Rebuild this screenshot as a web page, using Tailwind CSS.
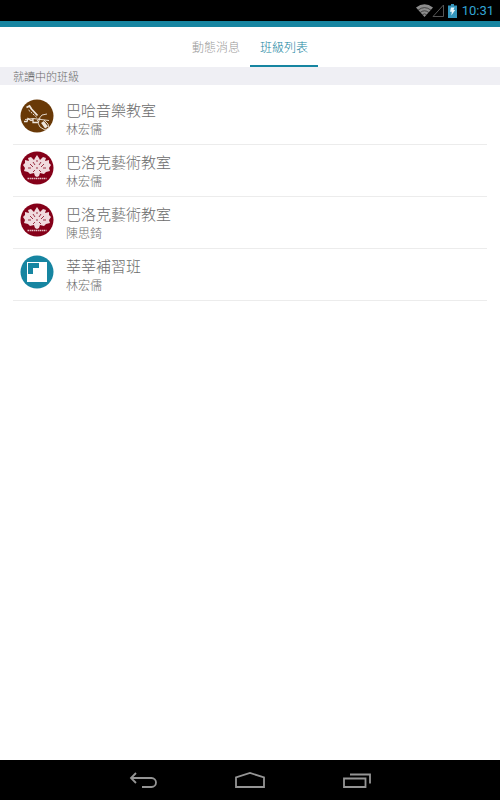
<!DOCTYPE html>
<html lang="zh-Hant">
<head>
    <meta charset="UTF-8">
    <meta name="viewport" content="width=device-width, initial-scale=1.0">
    <title>班級列表</title>
    <script src="https://cdn.jsdelivr.net/npm/@tailwindcss/browser@4"></script>
</head>

<body class="min-h-screen flex flex-col bg-white font-['Noto_Sans_CJK_TC',sans-serif] font-light text-[#6b6b6b]">

    <!-- status bar -->
    <div class="h-[21px] bg-black flex items-center justify-end pr-[6px] text-[#33a5d5]">
        <svg class="w-[17px] h-[13px]" viewBox="0 0 17 13" fill="none">
            <path d="M0 3.5Q8.500-3 17 3.500L8.500 13z" fill="#8c8c8c" />
            <path d="M2 6.200Q8.500 1 15 6.200M4 8.600Q8.500 5 13 8.600M6.300 10.700Q8.500 9 10.700 10.700" stroke="#222" stroke-width=".7" />
        </svg>
        <svg class="w-[12px] h-[13px] ml-[-1px]" viewBox="0 0 12 13" fill="none" stroke="#555">
            <path d="M11.500 1v11.500H1z" />
        </svg>
        <svg class="w-[9px] h-[14px] ml-[4px]" viewBox="0 0 9 14">
            <path d="M3 0h3v1.500h3V14H0V1.500h3z" fill="#3596bd" />
            <path d="M3 3.500h3.500L5.500 6h1.700L3.300 11.500l.5-3.800H2z" fill="#e8f6fb" />
        </svg>
        <span class="ml-[5px] font-[Roboto,sans-serif] font-normal text-[13px] leading-[21px]">10:31</span>
    </div>
    <div class="h-[6px] bg-[#1685a1]"></div>

    <!-- tabs -->
    <nav class="h-10 flex justify-center text-[12px]">
        <a href="#news" class="px-[10px] leading-10 text-[#999]">動態消息</a>
        <a href="#classes" class="px-[10px] leading-10 text-[#1685a1] border-b-2 border-[#1685a1]">班級列表</a>
    </nav>

    <main class="flex-1">
        <h1 class="bg-[#efeff4] pl-[13px] h-[18px] text-[11px] leading-[18px] font-light">就讀中的班級</h1>

        <ul class="mx-[13px] pt-2">
            <li class="h-[52px] flex pt-[6px] pl-[7px] gap-[12px] border-b border-[#ececec]">
                <svg class="w-[34px] h-[34px] shrink-0" viewBox="0 0 34 34" fill="none" stroke="#eee5dc">
                    <circle cx="17" cy="17" r="16.500" fill="#693907" stroke="none" />
                    <path d="M6.500 8.500l3-1.500 2 3 6 6.500" stroke-width="1.800" />
                    <path d="M8.500 11l9 8" stroke-width="1" stroke-dasharray="2 1" />
                    <path d="M22.500 23l4 5.500" stroke-width="3.500" />
                    <path d="M4 22.500h3l1-3 3 2 2-1v3h4l2-1" stroke-width="1.300" />
                    <path d="M5 20.500l8-1 8 1 8 1M17 22l5-6 5-1M20 19l-2 5 2 4 5 3 4-2-1-4-4-4" stroke-width=".9" />
                </svg>
                <div>
                    <h2 class="text-[15px] leading-[22px]">巴哈音樂教室</h2>
                    <p class="text-[12px] leading-[15px]">林宏儒</p>
                </div>
            </li>
            <li class="h-[52px] flex pt-[6px] pl-[7px] gap-[12px] border-b border-[#ececec]">
                <svg class="w-[34px] h-[34px] shrink-0" viewBox="0 0 34 34" fill="none">
                    <circle cx="17" cy="17" r="16.500" fill="#850019" />
                    <g id="crest">
                        <path d="M17 4l2 3 1 2 3-3 3 1-1 3 4-1v3l2 2-2 3 1 3-4 1-2 2-4-1-1 3-2 1-2-1-1-3-4 1-2-2-4-1 1-3-2-3 2-2V9l4 1-1-3 3-1 3 3 1-2z" fill="#f0dade" />
                        <path d="M13 11l2 3M21 11l-2 3M10 13l3 3M24 13l-3 3M8 17h3M26 17h-3M15 19l-2 2M19 19l2 2M17 9v2M17 16v2" stroke="#9b3045" stroke-width="1" />
                        <path d="M7.500 27.500h19" stroke="#e8c8ce" stroke-width="1.600" stroke-dasharray="1.800 .6 1 .6" />
                    </g>
                </svg>
                <div>
                    <h2 class="text-[15px] leading-[22px]">巴洛克藝術教室</h2>
                    <p class="text-[12px] leading-[15px]">林宏儒</p>
                </div>
            </li>
            <li class="h-[52px] flex pt-[6px] pl-[7px] gap-[12px] border-b border-[#ececec]">
                <svg class="w-[34px] h-[34px] shrink-0" viewBox="0 0 34 34" fill="none">
                    <circle cx="17" cy="17" r="16.500" fill="#850019" />
                    <use href="#crest" />
                </svg>
                <div>
                    <h2 class="text-[15px] leading-[22px]">巴洛克藝術教室</h2>
                    <p class="text-[12px] leading-[15px]">陳思錡</p>
                </div>
            </li>
            <li class="h-[52px] flex pt-[6px] pl-[7px] gap-[12px] border-b border-[#ececec]">
                <svg class="w-[34px] h-[34px] shrink-0" viewBox="0 0 34 34">
                    <circle cx="17" cy="17" r="16.500" fill="#1685a1" />
                    <path d="M7 7h20v20H7z" fill="#fff" />
                    <path d="M8 8h11v5h-6v6H8z" fill="#1685a1" />
                </svg>
                <div>
                    <h2 class="text-[15px] leading-[22px]">莘莘補習班</h2>
                    <p class="text-[12px] leading-[15px]">林宏儒</p>
                </div>
            </li>
        </ul>
    </main>

    <!-- system navigation -->
    <footer class="h-10 bg-black flex items-center justify-center gap-[77px]">
        <button type="button" aria-label="Back">
            <svg class="w-[30px] h-[18px]" viewBox="0 0 30 18" fill="none" stroke="#959595" stroke-width="1.800">
                <path d="M3 7h20.500a4.200 4.200 0 0 1 0 9H14M8 2L3 7l5 5" />
            </svg>
        </button>
        <button type="button" aria-label="Home">
            <svg class="w-[30px] h-[18px]" viewBox="0 0 30 18" fill="none" stroke="#959595" stroke-width="1.800">
                <path d="M1 16V6.500L15 2l14 4.500V16z" />
            </svg>
        </button>
        <button type="button" aria-label="Recent apps">
            <svg class="w-[30px] h-[18px]" viewBox="0 0 30 18" fill="none" stroke="#959595" stroke-width="1.800">
                <path d="M2 7.500h21.500V16H2zM8 3.500h20v9" />
            </svg>
        </button>
    </footer>

</body>
</html>
